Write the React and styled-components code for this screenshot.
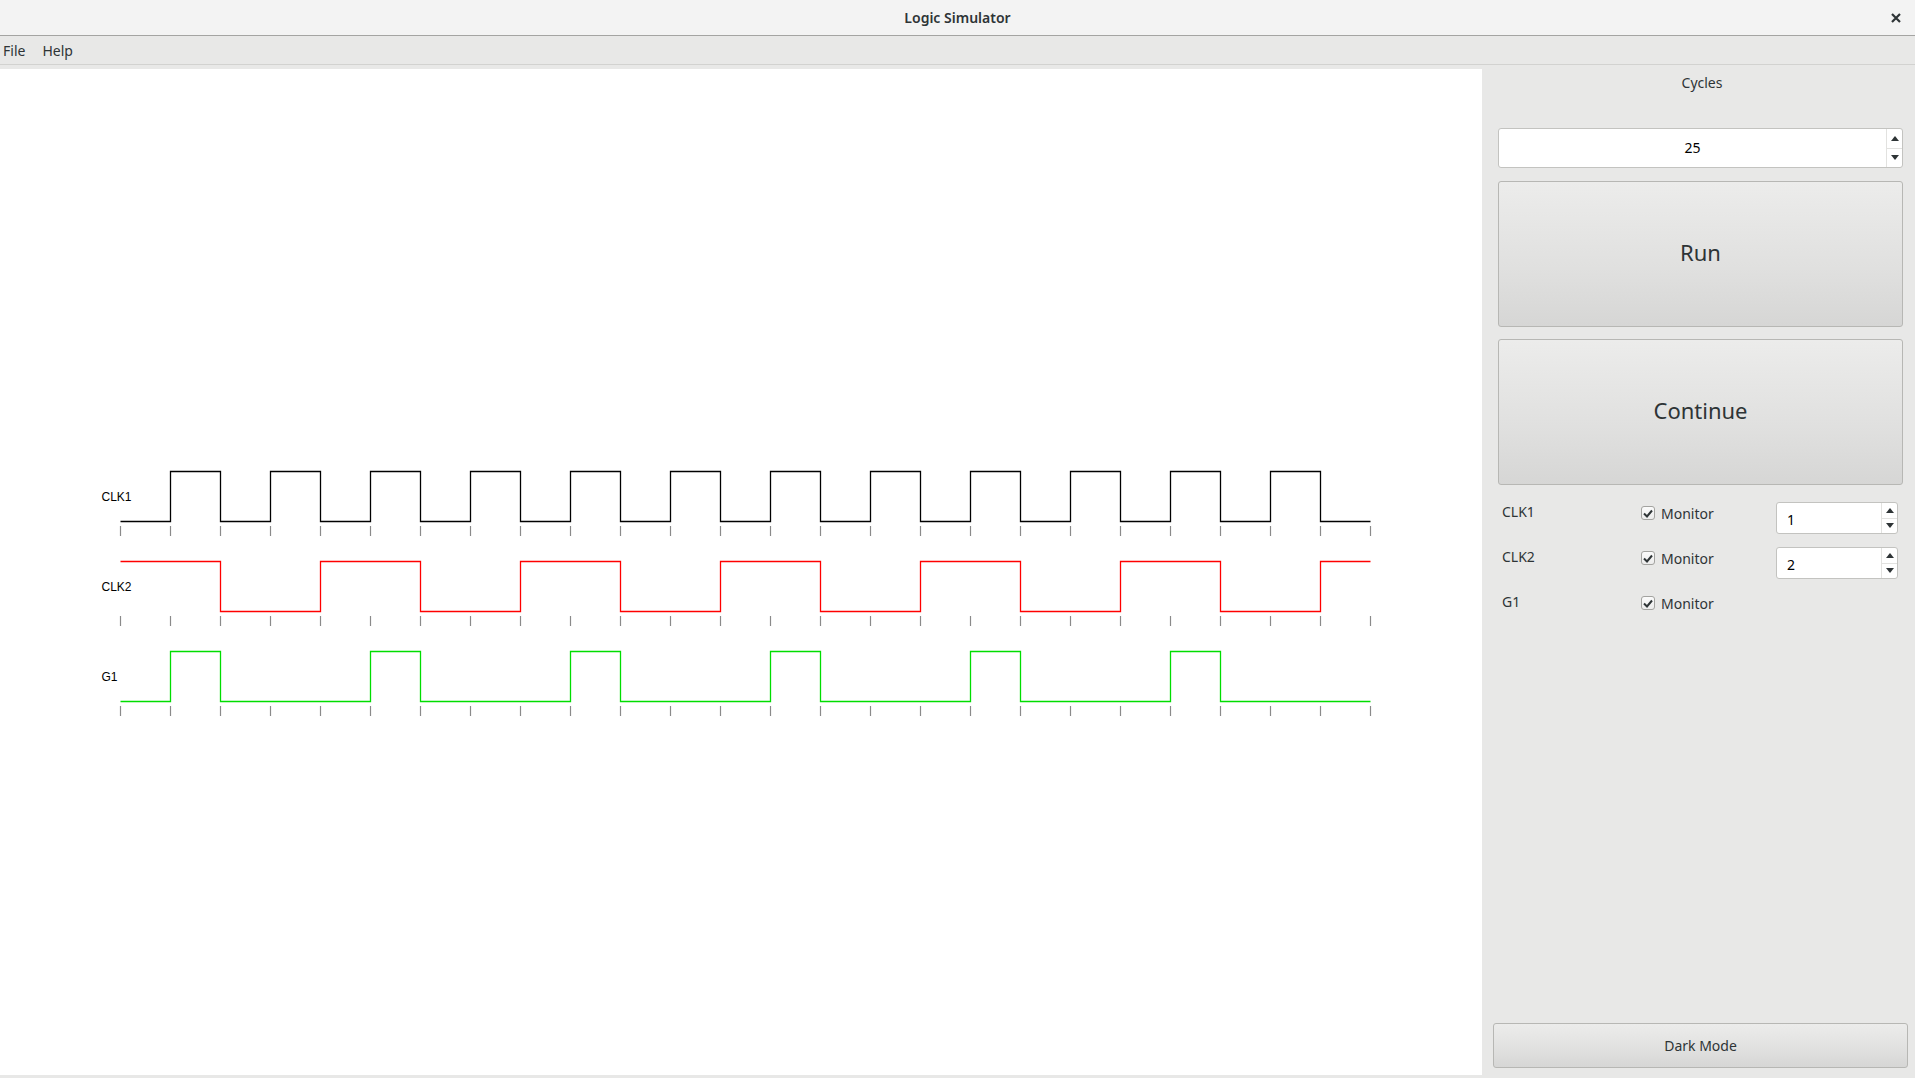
import React from "react";
import styled, { createGlobalStyle } from "styled-components";

const GlobalStyle = createGlobalStyle`
  html, body {
    margin: 0;
    padding: 0;
    height: 100%;
    overflow: hidden;
  }
  body {
    font-family: "Noto Sans", "Open Sans", sans-serif;
    color: #2e3436;
    background: #e8e8e7;
  }
  #root { height: 100%; }
`;

const Window = styled.div`
  display: flex;
  flex-direction: column;
  width: 1915px;
  height: 1078px;
  background: #e8e8e7;
`;

const TitleBar = styled.header`
  height: 35px;
  flex: 0 0 35px;
  display: grid;
  grid-template-columns: 1fr auto 1fr;
  align-items: center;
  background: #f3f3f3;
  border-bottom: 1px solid #a4a4a2;
`;

const Title = styled.div`
  grid-column: 2;
  font-size: 14px;
  font-weight: 600;
  color: #2e3436;
`;

const CloseButton = styled.div`
  justify-self: end;
  width: 12px;
  height: 12px;
  margin-right: 13px;
  display: flex;
  align-items: center;
  justify-content: center;
`;

const MenuBar = styled.nav`
  height: 28px;
  flex: 0 0 28px;
  display: flex;
  align-items: center;
  gap: 17px;
  padding-left: 3px;
  background: #e8e8e7;
  border-bottom: 1px solid #d2d2d0;
  font-size: 14px;
`;

const MenuItem = styled.span`
  color: #2e3436;
`;

const Main = styled.div`
  flex: 1;
  display: flex;
  min-height: 0;
`;

const Canvas = styled.div`
  width: 1482px;
  flex: 0 0 1482px;
  margin: 4px 0 3px 0;
  background: #ffffff;
`;

const Panel = styled.aside`
  flex: 1;
  display: flex;
  flex-direction: column;
  padding: 8px 12px 10px 16px;
  background: #e8e8e7;
`;

const PanelLabel = styled.div`
  text-align: center;
  font-size: 14px;
  line-height: 20px;
  margin-bottom: 35px;
  padding-left: 3px;
`;

const SpinBox = styled.div`
  display: flex;
  align-items: stretch;
  height: ${(p) => p.$h}px;
  width: ${(p) => (p.$w ? `${p.$w}px` : "auto")};
  box-sizing: border-box;
  background: #ffffff;
  border: 1px solid #c3c3c0;
  border-radius: 3px;
`;

const SpinValue = styled.div`
  flex: 1;
  display: flex;
  align-items: center;
  justify-content: ${(p) => (p.$center ? "center" : "flex-start")};
  padding-left: ${(p) => (p.$center ? "0" : "10px")};
  padding-top: ${(p) => (p.$center ? "0" : "2px")};
  padding-bottom: ${(p) => (p.$center ? "2px" : "0")};
  font-size: 14px;
  color: #000;
`;

const SpinArrows = styled.div`
  width: 15px;
  display: flex;
  flex-direction: column;
  border-left: 1px solid #e2e2e0;
`;

const SpinArrow = styled.div`
  flex: 1;
  display: flex;
  align-items: center;
  justify-content: center;
  & + & {
    border-top: 1px solid #e2e2e0;
  }
`;

const BigButton = styled.button`
  height: ${(p) => p.$h}px;
  margin-top: ${(p) => p.$mt}px;
  padding-bottom: 5px;
  box-sizing: border-box;
  border: 1px solid #b7b7b4;
  border-radius: 3px;
  background: linear-gradient(to bottom, #ececeb 0%, #e0e0df 60%, #d6d6d5 100%);
  font-family: "Noto Sans", "Open Sans", sans-serif;
  font-size: 22px;
  color: #2e3436;
  cursor: pointer;
`;

const MonitorGrid = styled.div`
  display: grid;
  grid-template-columns: 139px 135px 122px;
  grid-auto-rows: 32px;
  row-gap: 13px;
  margin-top: 17px;
  padding-left: 4px;
  align-items: start;
`;

const SignalName = styled.div`
  font-size: 14px;
  line-height: 20px;
`;

const MonitorCheck = styled.label`
  display: flex;
  align-items: center;
  gap: 6px;
  height: 22px;
  font-size: 14px;
`;

const CheckBox = styled.span`
  width: 14px;
  height: 14px;
  box-sizing: border-box;
  border: 1px solid #a3a3a0;
  border-radius: 3px;
  background: linear-gradient(to bottom, #fbfbfb, #ececec);
  display: flex;
  align-items: center;
  justify-content: center;
`;

const FooterButton = styled.button`
  margin: auto -5px 0 -5px;
  height: 45px;
  padding-bottom: 2px;
  box-sizing: border-box;
  border: 1px solid #b7b7b4;
  border-radius: 3px;
  background: linear-gradient(to bottom, #ececeb 0%, #e0e0df 60%, #d6d6d5 100%);
  font-family: "Noto Sans", "Open Sans", sans-serif;
  font-size: 14px;
  color: #2e3436;
`;

const UpTri = () => (
  <svg width="8" height="5" viewBox="0 0 8 5">
    <path d="M0 5 L4 0 L8 5 Z" fill="#2e3436" />
  </svg>
);
const DownTri = () => (
  <svg width="8" height="5" viewBox="0 0 8 5">
    <path d="M0 0 L4 5 L8 0 Z" fill="#2e3436" />
  </svg>
);

const Spinner = ({ value, h, w, center }) => (
  <SpinBox $h={h} $w={w}>
    <SpinValue $center={center}>{value}</SpinValue>
    <SpinArrows>
      <SpinArrow>
        <UpTri />
      </SpinArrow>
      <SpinArrow>
        <DownTri />
      </SpinArrow>
    </SpinArrows>
  </SpinBox>
);

const Check = () => (
  <CheckBox>
    <svg width="10" height="9" viewBox="0 0 10 9">
      <path d="M1 4.5 L4 7.5 L9 1.5" fill="none" stroke="#2e3436" strokeWidth="2" />
    </svg>
  </CheckBox>
);

const X0 = 120.5;
const STEP = 50;
const N = 25;

const signals = [
  { name: "CLK1", color: "#000000", hi: 402.5, fn: (i) => i % 2 === 1 },
  { name: "CLK2", color: "#ff0000", hi: 492.5, fn: (i) => Math.floor(i / 2) % 2 === 0 },
  { name: "G1", color: "#00dd00", hi: 582.5, fn: (i) => i % 4 === 1 },
];

function wavePath(sig) {
  const lo = sig.hi + 50;
  let d = "";
  let prev = null;
  for (let i = 0; i < N; i++) {
    const y = sig.fn(i) ? sig.hi : lo;
    const x = X0 + i * STEP;
    if (prev === null) d += `M${x} ${y}`;
    else if (prev !== y) d += ` L${x} ${y}`;
    d += ` L${x + STEP} ${y}`;
    prev = y;
  }
  return d;
}

const Waveforms = () => (
  <svg width="1482" height="1006" style={{ display: "block" }}>
    {signals.map((s) => {
      const lo = s.hi + 50;
      return (
        <g key={s.name}>
          <text
            x="101.5"
            y={s.hi + 29}
            fontFamily='"Liberation Sans", Arial, sans-serif'
            fontSize="12"
            fill="#000"
          >
            {s.name}
          </text>
          <path d={wavePath(s)} fill="none" stroke={s.color} strokeWidth="1.3" />
          {Array.from({ length: N + 1 }, (_, i) => (
            <line
              key={i}
              x1={X0 + i * STEP}
              x2={X0 + i * STEP}
              y1={lo + 4.5}
              y2={lo + 14.5}
              stroke="#8a8a8a"
              strokeWidth="1.2"
            />
          ))}
        </g>
      );
    })}
  </svg>
);

const rows = [
  { name: "CLK1", value: "1" },
  { name: "CLK2", value: "2" },
  { name: "G1", value: null },
];

export default function App() {
  return (
    <>
      <GlobalStyle />
      <Window>
        <TitleBar>
          <Title>Logic Simulator</Title>
          <CloseButton>
            <svg width="10" height="10" viewBox="0 0 10 10">
              <path d="M1 1 L9 9 M9 1 L1 9" stroke="#2e3436" strokeWidth="2.2" />
            </svg>
          </CloseButton>
        </TitleBar>
        <MenuBar>
          <MenuItem>File</MenuItem>
          <MenuItem>Help</MenuItem>
        </MenuBar>
        <Main>
          <Canvas>
            <Waveforms />
          </Canvas>
          <Panel>
            <PanelLabel>Cycles</PanelLabel>
            <Spinner value="25" h={40} center />
            <BigButton $h={146} $mt={13}>Run</BigButton>
            <BigButton $h={146} $mt={12}>Continue</BigButton>
            <MonitorGrid>
              {rows.map((r) => (
                <React.Fragment key={r.name}>
                  <SignalName>{r.name}</SignalName>
                  <MonitorCheck>
                    <Check />
                    Monitor
                  </MonitorCheck>
                  {r.value ? <Spinner value={r.value} h={32} w={122} /> : <div />}
                </React.Fragment>
              ))}
            </MonitorGrid>
            <FooterButton>Dark Mode</FooterButton>
          </Panel>
        </Main>
      </Window>
    </>
  );
}
